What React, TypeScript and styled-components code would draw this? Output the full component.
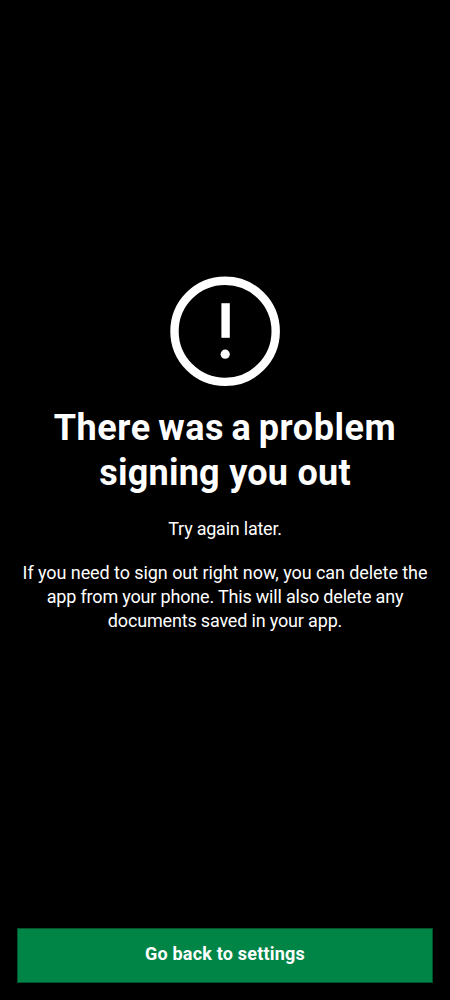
import React from 'react';
import styled, { createGlobalStyle } from 'styled-components';

const GlobalStyle = createGlobalStyle`
  * { box-sizing: border-box; }
  body { margin: 0; background: #000; }
`;

const Screen = styled.main`
  display: flex;
  flex-direction: column;
  height: 1000px;
  padding: 0 17px 17px;
  background: #000;
  color: #fff;
  font-family: Roboto, sans-serif;
  text-align: center;
`;

const Content = styled.section`
  flex: 1;
  display: flex;
  flex-direction: column;
  align-items: center;
  padding-top: 276px;
`;

const Icon = styled.svg`
  display: block;
  width: 110px;
  height: 111px;
`;

const Line = styled.span<{ $tracking: number; $wordGap?: number }>`
  display: block;
  white-space: nowrap;
  letter-spacing: ${({ $tracking }) => $tracking}px;
  word-spacing: ${({ $wordGap = 0 }) => $wordGap}px;
`;

const Title = styled.h1`
  margin: 19px 0 0;
  font-size: 36px;
  font-weight: 700;
  line-height: 45px;
`;

const Text = styled.p<{ $gap: number }>`
  margin: ${({ $gap }) => $gap}px 0 0;
  font-size: 18px;
  line-height: 24px;
`;

const Button = styled.button`
  height: 55px;
  padding: 0 0 3px;
  border: 1px solid #00542d;
  background: #008547;
  color: #fff;
  font: 700 18px/24px Roboto, sans-serif;
  letter-spacing: 0.2px;
`;

export default function App() {
  return (
    <Screen>
      <GlobalStyle />
      <Content>
        <Icon viewBox="0 0 110 111" aria-hidden="true">
          <circle cx="55.1" cy="55.3" r="50.6" fill="none" stroke="#fff" strokeWidth="8.4" />
          <path d="M51.4 27.2h8.4v34.6h-8.4z" fill="#fff" />
          <circle cx="55.2" cy="78.2" r="4.6" fill="#fff" />
        </Icon>
        <Title>
          <Line $tracking={0.55} $wordGap={-2}>There was a problem</Line>
          <Line $tracking={0.25}>signing you out</Line>
        </Title>
        <Text $gap={21}><Line $tracking={-0.23}>Try again later.</Line></Text>
        <Text $gap={20}>
          <Line $tracking={-0.07}>If you need to sign out right now, you can delete the</Line>
          <Line $tracking={-0.18}>app from your phone. This will also delete any</Line>
          <Line $tracking={-0.17}>documents saved in your app.</Line>
        </Text>
      </Content>
      <Button>Go back to settings</Button>
    </Screen>
  );
}
